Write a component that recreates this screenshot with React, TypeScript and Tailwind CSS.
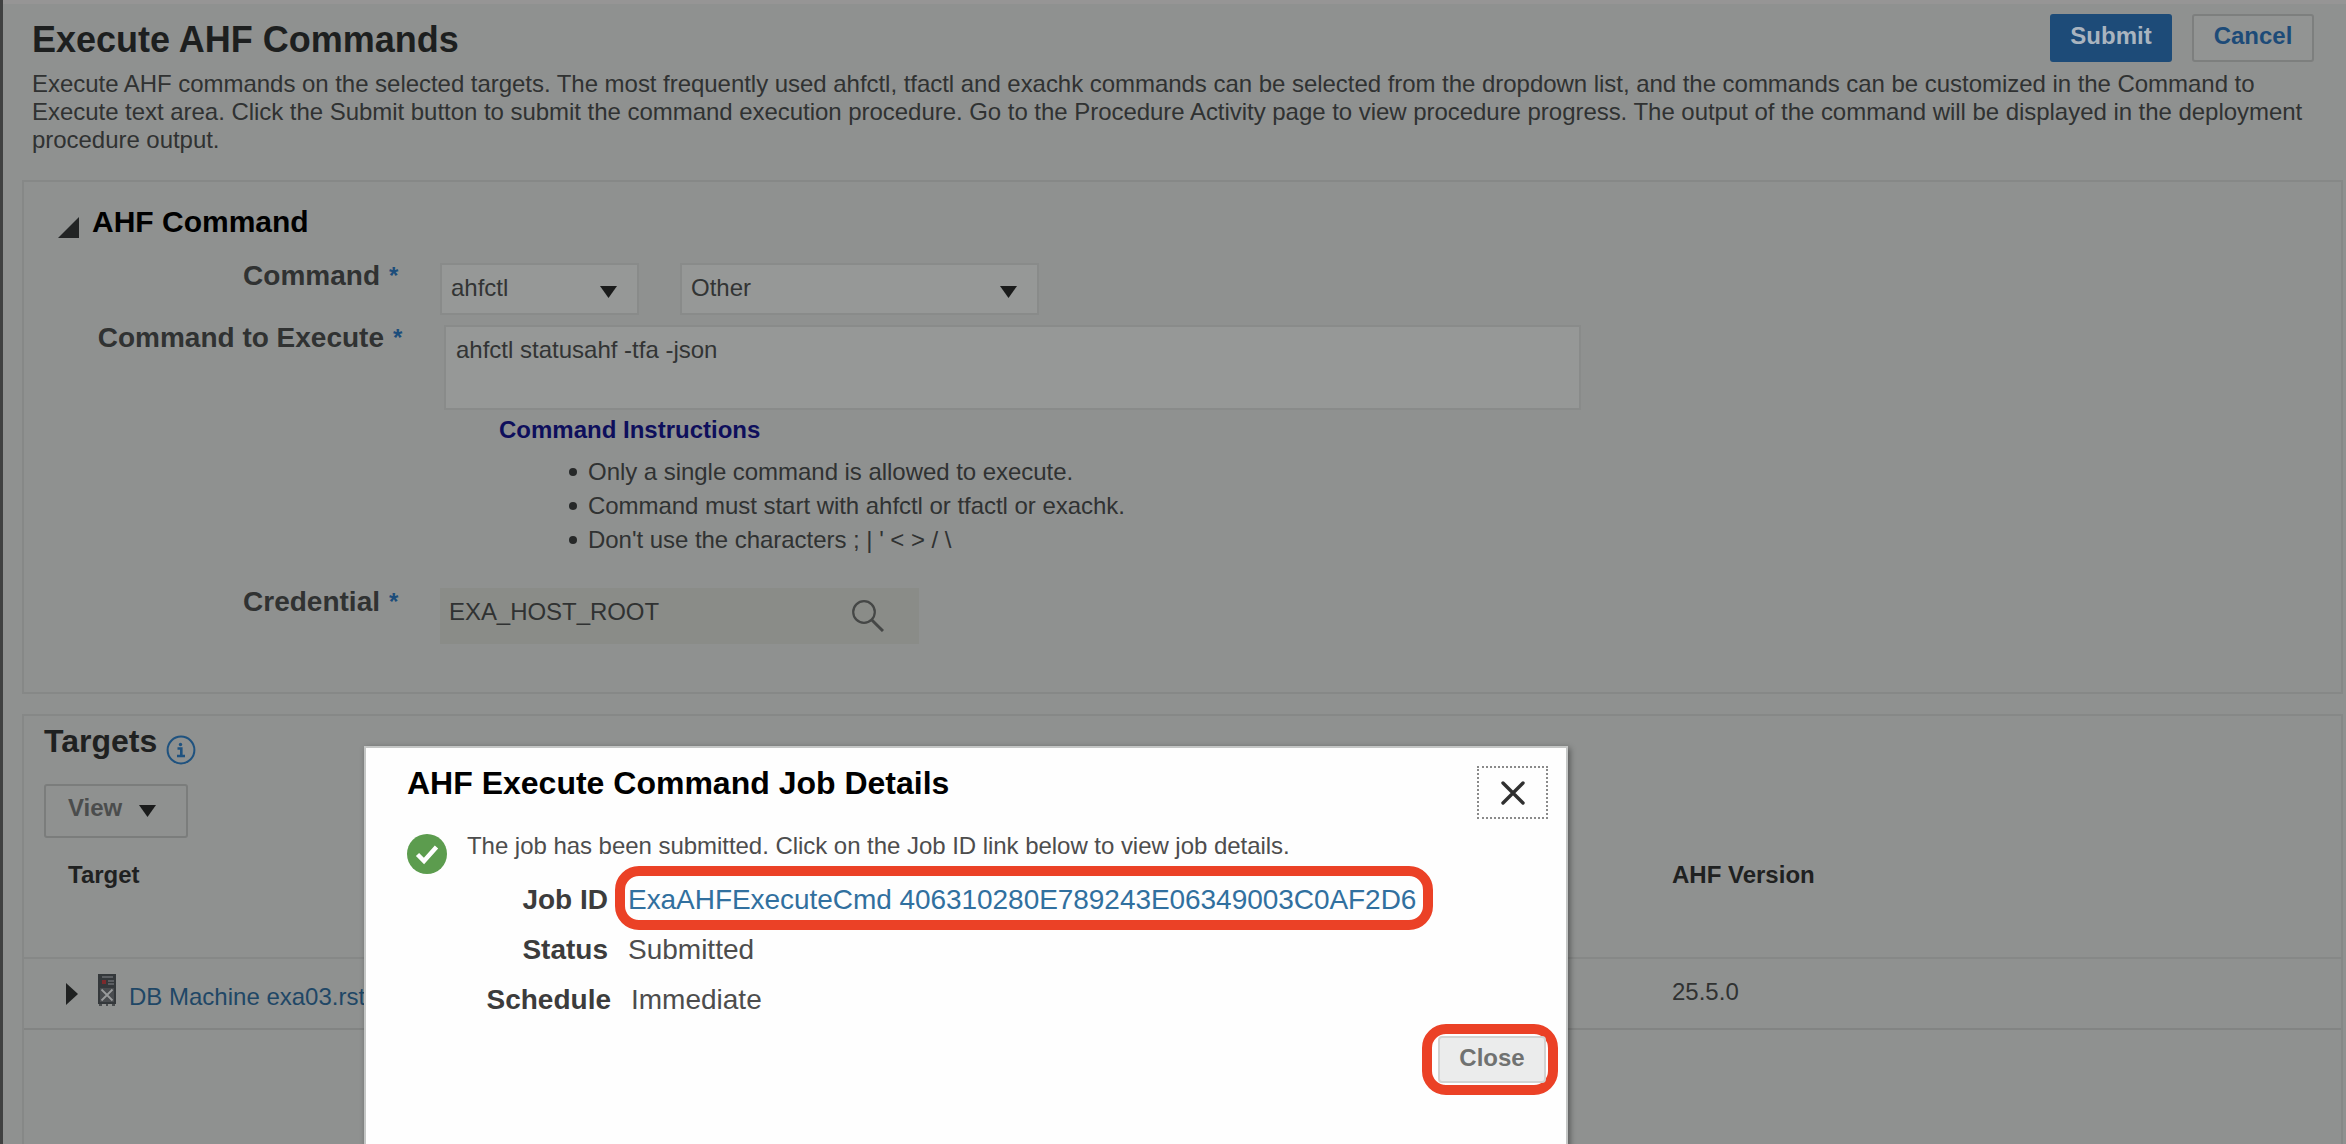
import type { ReactNode } from "react";

function Caret({ className = "" }: { className?: string }) {
  return (
    <svg className={`h-3 w-[17px] shrink-0 ${className}`} viewBox="0 0 18 12" preserveAspectRatio="none">
      <path d="M0 0H18L9 12Z" fill="currentColor" />
    </svg>
  );
}

function Label({ children, wide = false }: { children: ReactNode; wide?: boolean }) {
  return (
    <div className={`flex shrink-0 ${wide ? "w-[420px]" : "w-[416px]"}`}>
      <span
        className={`text-right text-[28px] leading-8 font-bold whitespace-nowrap text-[#303232] ${wide ? "w-[360px]" : "w-[356px]"}`}
      >
        {children}
      </span>
      <span className="ml-[9px] text-2xl leading-8 font-bold text-[#1c4d7b]">*</span>
    </div>
  );
}

function Select({ value, className }: { value: string; className: string }) {
  return (
    <div
      className={`mt-[3px] flex h-[52px] items-center justify-between border-2 border-[#898b8a] bg-[#969897] pr-[20px] pb-[2px] pl-[9px] text-2xl leading-7 text-[#323434] ${className}`}
    >
      {value}
      <Caret className="mt-[7px] text-[#1a1b1b]" />
    </div>
  );
}

const instructions = [
  "Only a single command is allowed to execute.",
  "Command must start with ahfctl or tfactl or exachk.",
  "Don't use the characters ; | ' < > / \\",
];

const descriptionLines = [
  "Execute AHF commands on the selected targets. The most frequently used ahfctl, tfactl and exachk commands can be selected from the dropdown list, and the commands can be customized in the Command to",
  "Execute text area. Click the Submit button to submit the command execution procedure. Go to the Procedure Activity page to view procedure progress. The output of the command will be displayed in the deployment",
  "procedure output.",
];

function CommandPanel() {
  return (
    <section className="ml-[19px] h-[514px] w-[2321px] border-2 border-[#868887] pt-[22px]">
      <div className="flex h-9 items-end pl-[34px]">
        <svg className="mb-[2px] h-[21px] w-[21px]" viewBox="0 0 21 21">
          <path d="M21 0V21H0Z" fill="#222424" />
        </svg>
        <h2 className="ml-[13px] text-[30px] leading-9 font-bold text-black">AHF Command</h2>
      </div>

      <div className="mt-5 flex h-[54px]">
        <Label>Command</Label>
        <Select value="ahfctl" className="w-[199px]" />
        <Select value="Other" className="ml-[41px] w-[359px]" />
      </div>

      <div className="mt-2 flex">
        <Label wide>Command to Execute</Label>
        <div className="mt-[3px] h-[85px] w-[1137px] border-2 border-[#898b8a] bg-[#969897] pt-[9px] pl-[10px] text-2xl leading-7 text-[#323434]">
          ahfctl statusahf -tfa -json
        </div>
      </div>

      <h3 className="mt-[6px] ml-[475px] text-2xl leading-7 font-bold text-[#0e0f5c]">
        Command Instructions
      </h3>
      <ul className="mt-[11px] ml-[545px] text-2xl leading-[34px] tracking-[-0.04px] text-[#303232]">
        {instructions.map((line) => (
          <li key={line} className="flex items-center">
            <span className="mr-[11px] size-[8px] rounded-full bg-[#262828]" />
            {line}
          </li>
        ))}
      </ul>

      <div className="mt-[29px] flex">
        <Label>Credential</Label>
        <div className="mt-[2px] flex h-14 w-[479px] items-center justify-between bg-[#8a8c88] pr-[35px] pl-[9px] text-2xl leading-7 text-[#303232]">
          <span className="mb-[8px] tracking-[-0.05px]">EXA_HOST_ROOT</span>
          <svg className="h-8 w-8" viewBox="0 0 32 32" fill="none" stroke="#454746" strokeWidth="2.2">
            <circle cx="12" cy="12" r="10.8" />
            <path d="M19.6 19.8L31 31" strokeWidth="3" />
          </svg>
        </div>
      </div>
    </section>
  );
}

function MachineIcon() {
  return (
    <svg className="h-8 w-5" viewBox="0 0 20 32">
      <rect x="1" y="0" width="18" height="30" fill="#34383b" />
      <rect x="2" y="30" width="3" height="2" fill="#4a4d4f" />
      <rect x="9" y="30" width="2" height="2" fill="#4a4d4f" />
      <rect x="15" y="30" width="3" height="2" fill="#4a4d4f" />
      <path d="M5 3H16M11 7H17M11 10H17" stroke="#686b70" strokeWidth="1.5" />
      <rect x="5" y="6" width="4" height="4" fill="#7c2a2c" />
      <rect x="3" y="14" width="14" height="14" fill="#494c4f" />
      <path d="M4.500 15.500L15.500 26.500M15.500 15.500L4.500 26.500" stroke="#999b9c" strokeWidth="1.800" />
    </svg>
  );
}

function TargetsPanel() {
  return (
    <section className="mt-5 ml-[19px] h-[460px] w-[2321px] border-2 border-[#868887] pt-[7px]">
      <div className="flex h-9 pl-5">
        <h2 className="text-[32px] leading-9 font-bold text-[#1f2121]">Targets</h2>
        <svg className="mt-3 ml-[9px] size-[30px] shrink-0" viewBox="0 0 30 30">
          <circle cx="15" cy="15" r="13.400" fill="none" stroke="#1f527f" strokeWidth="2" />
          <circle cx="14.500" cy="9.500" r="1.700" fill="#1f527f" />
          <path d="M11.500 13.500H15.300V21M11 21H19" fill="none" stroke="#1f527f" strokeWidth="2.600" />
        </svg>
      </div>
      <button className="mt-[25px] ml-5 flex h-[54px] w-[144px] items-center rounded-[3px] border-2 border-[#7b7d7c] pb-[7px] pl-[22px] text-2xl leading-7 font-bold text-[#4b4d4d]">
        View
        <Caret className="mt-[7px] ml-[17px] text-[#1a1b1b]" />
      </button>
      <div className="flex h-[121px] border-b-2 border-[#868887] pt-[23px] text-2xl leading-7 font-bold text-[#1f2121]">
        <span className="w-[1648px] pl-[44px]">Target</span>
        <span>AHF Version</span>
      </div>
      <div className="flex h-[71px] border-b-2 border-[#828483] text-2xl leading-7">
        <div className="flex w-[1648px] pl-[42px]">
          <svg className="mt-6 h-[22px] w-3" viewBox="0 0 12 22">
            <path d="M0 0L12 11L0 22Z" fill="#1f2121" />
          </svg>
          <div className="mt-[15px] ml-[19px]">
            <MachineIcon />
          </div>
          <span className="mt-6 ml-[12px] text-[#1f4766]">DB Machine exa03.rst</span>
        </div>
        <span className="mt-[19px] text-[#303232]">25.5.0</span>
      </div>
    </section>
  );
}

function JobDialog() {
  return (
    <div
      role="dialog"
      className="absolute top-[746px] left-[361px] h-[420px] w-[1204px] border-2 border-[#c4c6c5] bg-[#fefefe] pt-[17px] shadow-[2px_2px_6px_rgba(0,0,0,0.4)]"
    >
      <div className="flex h-[67px] justify-between pr-[18px] pl-[41px]">
        <h2 className="text-[32px] leading-9 font-bold text-black">AHF Execute Command Job Details</h2>
        <button className="mt-px flex h-[53px] w-[71px] items-center justify-center border-2 border-dotted border-[#8a8a8a]">
          <svg className="h-6 w-6" viewBox="0 0 24 24" stroke="#303030" strokeWidth="3.400" strokeLinecap="round">
            <path d="M2 2L22 22M22 2L2 22" />
          </svg>
        </button>
      </div>
      <div className="flex h-[52px] pl-[41px]">
        <svg className="mt-[2px] size-10" viewBox="0 0 40 40">
          <circle cx="20" cy="20" r="20" fill="#5c9c4e" />
          <path d="M10.500 20.500L17 27L29.500 13" fill="none" stroke="#fff" strokeWidth="4.500" />
        </svg>
        <p className="ml-[20px] text-2xl leading-7 tracking-[-0.04px] whitespace-nowrap text-[#4d4d4d]">
          The job has been submitted. Click on the Job ID link below to view job details.
        </p>
      </div>
      <dl className="flex flex-col gap-[18px] text-[28px] leading-8 whitespace-nowrap text-[#4d4d4d]">
        <div className="flex">
          <dt className="w-[242px] text-right font-bold text-[#3c3c3c]">Job ID</dt>
          <dd className="relative ml-[20px] tracking-[-0.05px] text-[#31709f]">
            ExaAHFExecuteCmd 406310280E789243E06349003C0AF2D6
            <span className="absolute -top-[18px] -left-[13px] h-16 w-[818px] rounded-[24px] border-[10px] border-[#eb4126]" />
          </dd>
        </div>
        <div className="flex">
          <dt className="w-[242px] text-right font-bold text-[#3c3c3c]">Status</dt>
          <dd className="ml-[20px]">Submitted</dd>
        </div>
        <div className="flex">
          <dt className="w-[245px] text-right font-bold text-[#3c3c3c]">Schedule</dt>
          <dd className="ml-[20px]">Immediate</dd>
        </div>
      </dl>
      <div className="mt-2 ml-[1056px] flex h-[71px] w-[136px] items-stretch rounded-[24px] border-[10px] border-[#eb4126] py-[2px] pr-[2px] pl-[6px]">
        <button className="w-full rounded-[4px] border-2 border-[#d2d3d2] bg-[#ebecec] pb-[3px] text-2xl leading-7 font-bold text-[#707271]">
          Close
        </button>
      </div>
    </div>
  );
}

export default function App() {
  return (
    <main className="relative h-[1144px] w-[2346px] overflow-hidden border-l-[3px] border-[#404141] bg-[#8f9190] font-['Liberation_Sans',Arial,sans-serif]">
      <div className="h-1 bg-[#969595]" />
      <header className="h-44 pl-[29px]">
        <div className="flex h-[66px] items-start justify-between pr-8">
          <h1 className="mt-[14px] text-[36px] leading-[44px] font-bold text-[#1d1f1f]">Execute AHF Commands</h1>
          <div className="mt-[10px] flex gap-5 text-2xl leading-7 font-bold">
            <button className="h-12 w-[122px] rounded-[3px] bg-[#1d4b78] pb-[4px] text-[#a9b4bf]">Submit</button>
            <button className="h-12 w-[122px] rounded-[3px] border-2 border-[#7d7f7e] bg-[#929493] pb-[4px] text-[#1d4b78]">
              Cancel
            </button>
          </div>
        </div>
        <p className="text-2xl leading-7 tracking-[-0.038px] whitespace-nowrap text-[#303232]">
          {descriptionLines.map((line) => (
            <span key={line} className="block">
              {line}
            </span>
          ))}
        </p>
      </header>
      <CommandPanel />
      <TargetsPanel />
      <JobDialog />
    </main>
  );
}
